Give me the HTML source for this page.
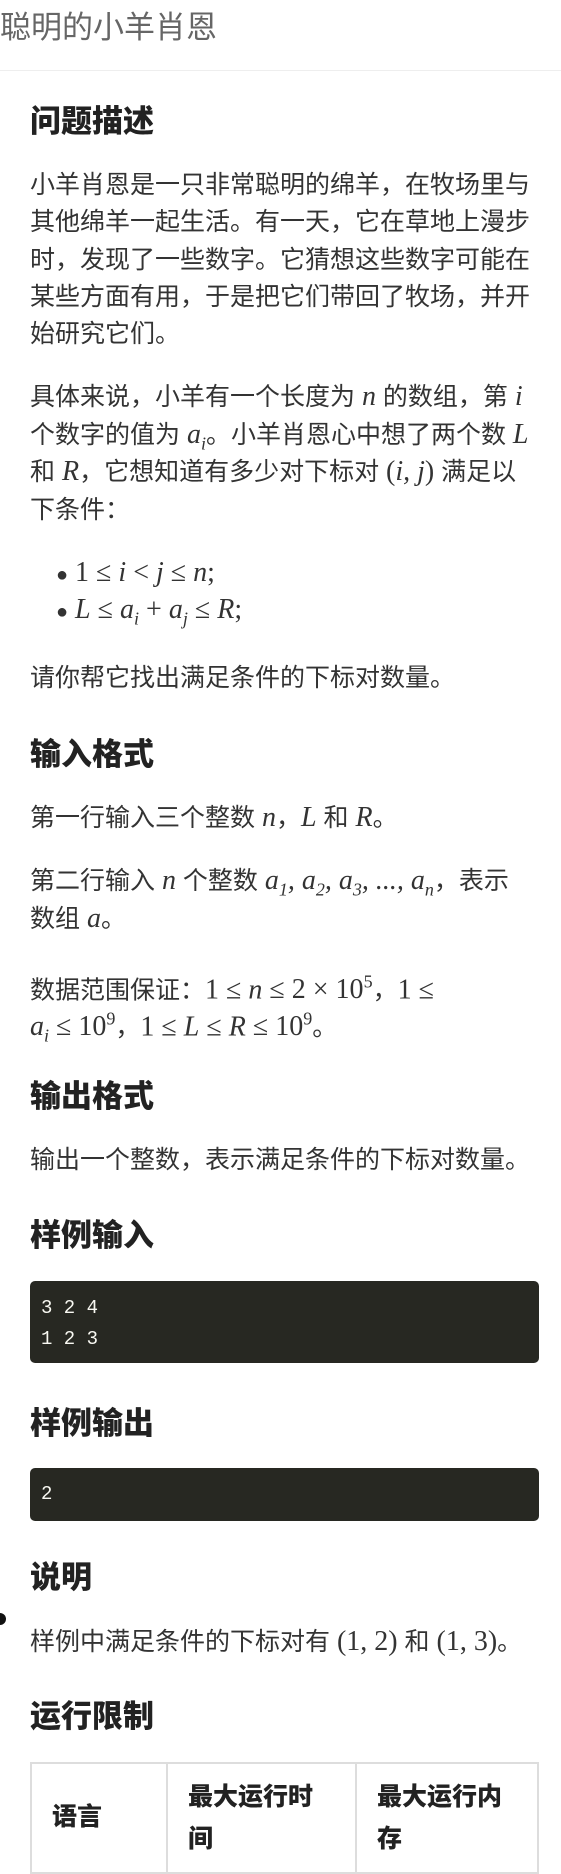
<!DOCTYPE html>
<html><head><meta charset="utf-8"><style>
body{margin:0;width:561px;height:1842px;background:#fff;position:relative;overflow:hidden;font-family:"Liberation Sans","Noto Sans CJK SC",sans-serif;color:#333}
.l{position:absolute;left:30px;white-space:nowrap;font-size:25px;line-height:38px;height:38px}
.h{position:absolute;left:30px;white-space:nowrap;font-size:31px;font-weight:900;color:#222;line-height:40px}
.m{font-family:"Liberation Serif","DejaVu Serif",serif;font-style:italic;font-size:28px}
.r{font-family:"Liberation Serif","DejaVu Serif",serif;font-size:28px}
sub,sup{font-size:18px;font-family:"Liberation Serif",serif}
.code{position:absolute;left:30px;width:509px;background:#272822;border-radius:5px;color:#f8f8f2;font-family:"Liberation Mono","DejaVu Sans Mono",monospace;font-size:19px}
table{position:absolute;left:30px;top:1762px;width:509px;border-collapse:collapse}
td{border:2px solid #ddd;font-weight:900;color:#222;font-size:25px;vertical-align:top;padding:12px 20px;line-height:42px}
</style></head><body>
<div style="position:absolute;left:0;top:8px;font-size:31px;color:#666;line-height:40px;white-space:nowrap">聪明的小羊肖恩</div>
<div style="position:absolute;left:0;top:70px;width:561px;height:1px;background:#eee"></div>

<div class="h" style="top:102px">问题描述</div>
<div class="l" style="top:166px">小羊肖恩是一只非常聪明的绵羊，在牧场里与</div>
<div class="l" style="top:203px">其他绵羊一起生活。有一天，它在草地上漫步</div>
<div class="l" style="top:241px">时，发现了一些数字。它猜想这些数字可能在</div>
<div class="l" style="top:278px">某些方面有用，于是把它们带回了牧场，并开</div>
<div class="l" style="top:315px">始研究它们。</div>

<div class="l" style="top:378px">具体来说，小羊有一个长度为 <span class="m">n</span> 的数组，第 <span class="m">i</span></div>
<div class="l" style="top:416px">个数字的值为 <span class="m">a<sub>i</sub></span>。小羊肖恩心中想了两个数 <span class="m">L</span></div>
<div class="l" style="top:453px">和 <span class="m">R</span>，它想知道有多少对下标对 <span class="r">(</span><span class="m">i, j</span><span class="r">)</span> 满足以</div>
<div class="l" style="top:491px">下条件：</div>
<div class="l" style="top:554px;left:56px"><span style="font-size:20px">●</span> <span class="r">1 ≤ </span><span class="m">i</span><span class="r"> &lt; </span><span class="m">j</span><span class="r"> ≤ </span><span class="m">n</span><span class="r">;</span></div>
<div class="l" style="top:591px;left:56px"><span style="font-size:20px">●</span> <span class="m">L</span><span class="r"> ≤ </span><span class="m">a<sub>i</sub></span><span class="r"> + </span><span class="m">a<sub>j</sub></span><span class="r"> ≤ </span><span class="m">R</span><span class="r">;</span></div>
<div class="l" style="top:659px">请你帮它找出满足条件的下标对数量。</div>

<div class="h" style="top:735px">输入格式</div>
<div class="l" style="top:799px">第一行输入三个整数 <span class="m">n</span>，<span class="m">L</span> 和 <span class="m">R</span>。</div>
<div class="l" style="top:862px">第二行输入 <span class="m">n</span> 个整数 <span class="m">a<sub>1</sub>, a<sub>2</sub>, a<sub>3</sub>, ..., a<sub>n</sub></span>，表示</div>
<div class="l" style="top:900px">数组 <span class="m">a</span>。</div>
<div class="l" style="top:963px">数据范围保证：<span class="r">1 ≤ </span><span class="m">n</span><span class="r"> ≤ 2 × 10<sup>5</sup></span>，<span class="r">1 ≤</span></div>
<div class="l" style="top:1000px"><span class="m">a<sub>i</sub></span><span class="r"> ≤ 10<sup>9</sup></span>，<span class="r">1 ≤ </span><span class="m">L</span><span class="r"> ≤ </span><span class="m">R</span><span class="r"> ≤ 10<sup>9</sup></span>。</div>

<div class="h" style="top:1077px">输出格式</div>
<div class="l" style="top:1141px">输出一个整数，表示满足条件的下标对数量。</div>

<div class="h" style="top:1216px">样例输入</div>
<div class="code" style="top:1281px;height:82px"><div style="position:absolute;left:11px;top:12px;line-height:31px">3 2 4<br>1 2 3</div></div>

<div class="h" style="top:1404px">样例输出</div>
<div class="code" style="top:1468px;height:53px"><div style="position:absolute;left:11px;top:11px;line-height:31px">2</div></div>

<div class="h" style="top:1558px">说明</div>
<div style="position:absolute;left:-6px;top:1613px;width:12px;height:12px;border-radius:50%;background:#111"></div>
<div class="l" style="top:1623px">样例中满足条件的下标对有 <span class="r">(1, 2)</span> 和 <span class="r">(1, 3)</span>。</div>

<div class="h" style="top:1697px">运行限制</div>
<table><tr>
<td style="width:94px;padding-top:32px">语言</td>
<td style="width:147px">最大运行时<br>间</td>
<td>最大运行内<br>存</td>
</tr></table>
</body></html>
